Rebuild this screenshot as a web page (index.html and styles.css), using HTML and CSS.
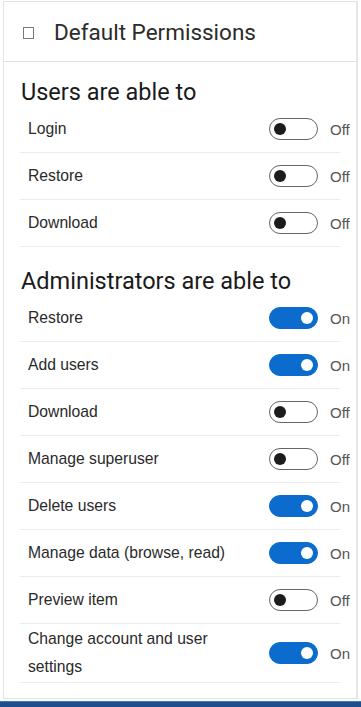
FILE: index.html
```html
<!DOCTYPE html>
<html>
<head>
<meta charset="utf-8">
<link rel="stylesheet" href="styles.css">
</head>
<body>
<div class="page">
  <div class="panel">
    <div class="header">
      <span class="box"></span>
      <span class="title">Default Permissions</span>
    </div>
    <div class="section users">
      <h2 class="section-title">Users are able to</h2>
      <div class="row"><span class="label">Login</span><span class="sw"><span class="toggle off"><span class="knob"></span></span><span class="state">Off</span></span></div>
      <div class="row"><span class="label">Restore</span><span class="sw"><span class="toggle off"><span class="knob"></span></span><span class="state">Off</span></span></div>
      <div class="row"><span class="label">Download</span><span class="sw"><span class="toggle off"><span class="knob"></span></span><span class="state">Off</span></span></div>
    </div>
    <div class="section admins">
      <h2 class="section-title">Administrators are able to</h2>
      <div class="row"><span class="label">Restore</span><span class="sw"><span class="toggle on"><span class="knob"></span></span><span class="state">On</span></span></div>
      <div class="row"><span class="label">Add users</span><span class="sw"><span class="toggle on"><span class="knob"></span></span><span class="state">On</span></span></div>
      <div class="row"><span class="label">Download</span><span class="sw"><span class="toggle off"><span class="knob"></span></span><span class="state">Off</span></span></div>
      <div class="row"><span class="label">Manage superuser</span><span class="sw"><span class="toggle off"><span class="knob"></span></span><span class="state">Off</span></span></div>
      <div class="row"><span class="label">Delete users</span><span class="sw"><span class="toggle on"><span class="knob"></span></span><span class="state">On</span></span></div>
      <div class="row"><span class="label">Manage data (browse, read)</span><span class="sw"><span class="toggle on"><span class="knob"></span></span><span class="state">On</span></span></div>
      <div class="row"><span class="label">Preview item</span><span class="sw"><span class="toggle off"><span class="knob"></span></span><span class="state">Off</span></span></div>
      <div class="row"><span class="label">Change account and user settings</span><span class="sw"><span class="toggle on"><span class="knob"></span></span><span class="state">On</span></span></div>
    </div>
  </div>
  <div class="bottom-bar"></div>
</div>
</body>
</html>
```
FILE: styles.css
```css
html, body {
  margin: 0;
  padding: 0;
  background: #ffffff;
}
.page {
  width: 361px;
  height: 707px;
  display: flex;
  flex-direction: column;
  background: #ffffff;
  overflow: hidden;
}
.panel {
  margin: 1px 3px 0 3px;
  border: 1px solid #e3e3e3;
  border-right: 2px solid #e6e6e6;
  height: 699px;
  box-sizing: border-box;
  background: #fff;
}
.header {
  height: 60px;
  border-bottom: 1px solid #e1e1e1;
  display: flex;
  align-items: center;
  padding-left: 19px;
  box-sizing: border-box;
}
.box {
  width: 9px;
  height: 10px;
  border: 1px solid #7a7a7a;
  margin-right: 20px;
  margin-top: 2px;
}
.title {
  font-family: Roboto, "Noto Sans", sans-serif;
  font-size: 22.5px;
  color: #2b2b2b;
}
.section-title {
  margin: 0;
  font-family: Roboto, "Noto Sans", sans-serif;
  font-weight: 400;
  font-size: 23.5px;
  color: #1a1a1a;
  padding-left: 17px;
  line-height: 28px;
}
.users .section-title {
  margin-top: 16px;
}
.admins .section-title {
  margin-top: 20px;
}
.row {
  display: flex;
  align-items: center;
  margin: 0 16px 0 16px;
  padding: 1px 0 1px 8px;
  border-bottom: 1px solid #ececec;
  box-sizing: border-box;
  min-height: 47px;
  font-family: "Liberation Sans", Arial, sans-serif;
  font-size: 15.7px;
  color: #2a2a2a;
}
.label {
  flex: 1;
  line-height: 28px;
  padding-right: 20px;
}
.sw {
  display: flex;
  align-items: center;
  width: 82px;
  margin-right: -11px;
  flex-shrink: 0;
}
.toggle {
  width: 49px;
  height: 22px;
  border-radius: 11px;
  box-sizing: border-box;
  display: flex;
  align-items: center;
  padding: 0 4px;
}
.toggle.off {
  border: 1px solid #666;
  background: #fff;
  justify-content: flex-start;
}
.toggle.on {
  background: #0b6cce;
  border: 1px solid #0b6cce;
  justify-content: flex-end;
}
.knob {
  width: 12px;
  height: 12px;
  border-radius: 50%;
}
.off .knob {
  background: #1c1c1c;
}
.on .knob {
  background: #fff;
}
.state {
  margin-left: 12px;
  color: #555;
  font-size: 15px;
}
.bottom-bar {
  margin-top: 2px;
  height: 5px;
  background: #1e4f8c;
  border-top: 1px solid #3f7bc0;
}
```
